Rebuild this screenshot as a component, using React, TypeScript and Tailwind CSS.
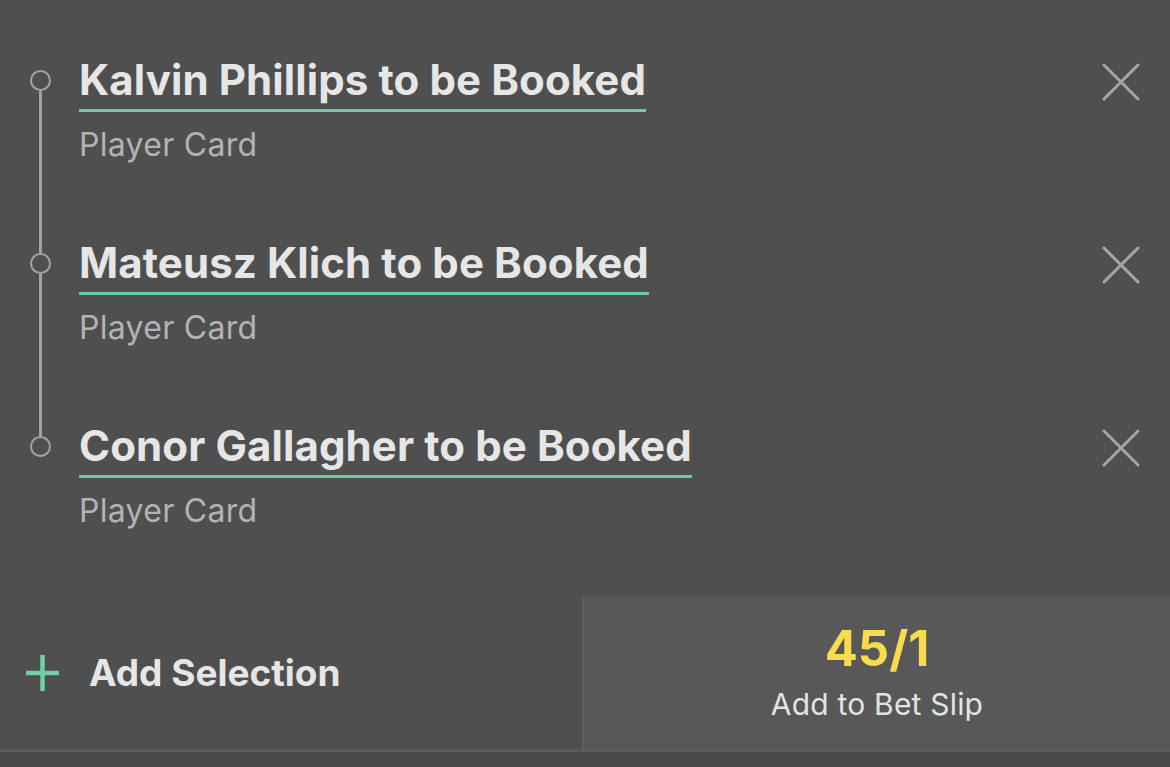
const selections = [
  { id: 1, title: "Kalvin Phillips to be Booked", market: "Player Card" },
  { id: 2, title: "Mateusz Klich to be Booked", market: "Player Card" },
  { id: 3, title: "Conor Gallagher to be Booked", market: "Player Card" },
];

function CloseIcon() {
  return (
    <svg width="38" height="38" viewBox="0 0 38 38" fill="none">
      <path
        d="M2 2 L36 36 M36 2 L2 36"
        stroke="#a5a5a5"
        strokeWidth="3"
        strokeLinecap="round"
      />
    </svg>
  );
}

function PlusIcon() {
  return (
    <svg width="33" height="36" viewBox="0 0 33 36" fill="none">
      <path d="M16.5 0 V36 M0 18 H33" stroke="#6fcfa6" strokeWidth="4.5" />
    </svg>
  );
}

export default function App() {
  return (
    <div
      className="w-[1170px] h-[767px] bg-[#4f4f4f] flex flex-col overflow-hidden"
      style={{ fontFamily: "Inter, 'Noto Sans', sans-serif" }}
    >
      <div className="h-[597px] pt-[56px] flex flex-col">
        {selections.map((s, i) => {
          const first = i === 0;
          const last = i === selections.length - 1;
          return (
            <div
              key={s.id}
              className={`flex ${last ? "flex-1" : "h-[183px]"}`}
            >
              <div className="w-[81px] flex flex-col items-center shrink-0">
                <div
                  className={`w-[3px] h-[14px] ${first ? "" : "bg-[#a3a3a3]"}`}
                />
                <div className="w-[21px] h-[21px] rounded-full border-[2.5px] border-[#a3a3a3] shrink-0" />
                <div
                  className={`w-[3px] flex-1 ${last ? "" : "bg-[#a3a3a3]"}`}
                />
              </div>
              <div className="flex-1 flex flex-col items-start -ml-[2px]">
                <div className="text-[42px] leading-[48px] font-bold text-[#e6e6e6] tracking-[0.1px] pb-[5px] border-b-[3px] border-[#6fcba6]">
                  {s.title}
                </div>
                <div className="mt-[14px] text-[32px] leading-[38px] text-[#b3b3b3] tracking-[0.3px]">
                  {s.market}
                </div>
              </div>
              <div className="pr-[30px] pt-[7px]">
                <CloseIcon />
              </div>
            </div>
          );
        })}
      </div>

      <div className="h-[152px] flex border-b-[3px] border-[#5b5b5b] box-content">
        <div className="w-[582px] flex items-center pl-[26px] gap-[30px]">
          <PlusIcon />
          <span className="text-[37px] font-bold text-[#e6e6e6]">
            Add Selection
          </span>
        </div>
        <div className="flex-1 bg-[#585858] border-l-[2px] border-[#5e5e5e] flex flex-col items-center pt-[25px]">
          <span className="text-[49px] leading-[54px] font-bold text-[#f7dc4d]">
            45/1
          </span>
          <span className="mt-[10px] text-[30px] leading-[36px] text-[#e3e3e3] tracking-[0.2px]">
            Add to Bet Slip
          </span>
        </div>
      </div>
      <div className="flex-1 bg-[#4a4a4a]" />
    </div>
  );
}
